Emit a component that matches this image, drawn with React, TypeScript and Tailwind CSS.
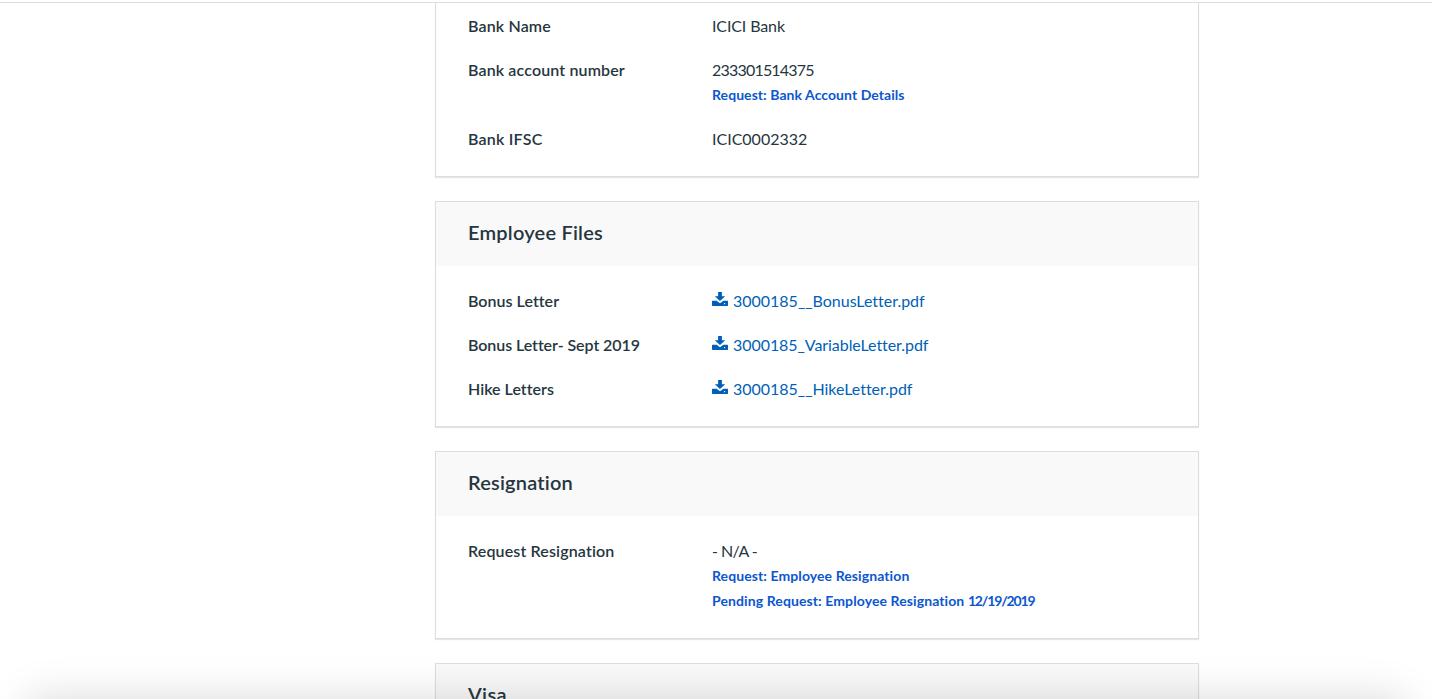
import type { ReactNode } from "react";

function DownloadIcon() {
  return (
    <svg width="16" height="14" viewBox="0 0 16 14" className="mt-[3px] mr-[5px] shrink-0" fill="currentColor" aria-hidden="true">
      <path d="M6.100 0h3.800v4.200h3.300L8 9 2.800 4.200h3.300z" />
      <path d="M.6 8.800H4.600L8 11.300l3.400-2.500h4q.6 0 .6.6v3.900q0 .6-.6.6H.6q-.6 0-.6-.6V9.400q0-.6.6-.6zM12 11.100v1.100h1.100v-1.100z" fillRule="evenodd" />
    </svg>
  );
}

function Card({ title, track, children }: { title: string; track: string; children?: ReactNode }) {
  return (
    <section className="mb-6 border border-[#dcdddf] bg-white shadow-[0_1px_1px_rgba(0,0,0,0.1)]">
      <h2 className={`flex h-16 items-center bg-[#f9f9f9] px-8 pb-[5px] text-xl font-semibold ${track}`}>{title}</h2>
      {children && <div className="flex flex-col gap-5 px-8 pt-[23px] pb-[25px]">{children}</div>}
    </section>
  );
}

function Row({ label, track, children }: { label: string; track: string; children: ReactNode }) {
  return (
    <div className="flex">
      <div className={`w-[244px] shrink-0 font-semibold ${track}`}>{label}</div>
      <div>{children}</div>
    </div>
  );
}

function RequestLink({ track, children }: { track: string; children: ReactNode }) {
  return <a className={`block h-[25px] text-sm leading-[26px] font-bold text-[#0b57d0] ${track}`}>{children}</a>;
}

function FileLink({ name, track }: { name: string; track: string }) {
  return (
    <a className={`flex text-[#005fb8] ${track}`}>
      <DownloadIcon />
      {name}
    </a>
  );
}

export default function App() {
  return (
    <div className="relative h-[699px] overflow-hidden bg-white pt-[2px] font-['Lato',sans-serif] text-base leading-6 whitespace-nowrap text-[#263640]">
      <div className="h-px bg-[#dcdddf]" />
      <main className="ml-[435px] w-[764px]">
        <section className="mb-6 flex flex-col gap-5 border border-t-0 border-[#dcdddf] px-8 pt-[11px] pb-[25px] shadow-[0_1px_1px_rgba(0,0,0,0.1)]">
          <Row label="Bank Name" track="tracking-[0.15px]"><span className="tracking-[-0.12px]">ICICI Bank</span></Row>
          <Row label="Bank account number" track="tracking-[0.14px]">
            <div className="tracking-[-0.8px]">233301514375</div>
            <RequestLink track="tracking-[0.06px]">Request: Bank Account Details</RequestLink>
          </Row>
          <Row label="Bank IFSC" track="tracking-[0.22px]">ICIC0002332</Row>
        </section>
        <Card title="Employee Files" track="tracking-[0.22px]">
          <Row label="Bonus Letter" track="tracking-[0.04px]"><FileLink name="3000185__BonusLetter.pdf" track="tracking-[-0.01px]" /></Row>
          <Row label="Bonus Letter- Sept 2019" track="tracking-[-0.06px]"><FileLink name="3000185_VariableLetter.pdf" track="tracking-[-0.06px]" /></Row>
          <Row label="Hike Letters" track="tracking-[0.02px]"><FileLink name="3000185__HikeLetter.pdf" track="tracking-[-0.02px]" /></Row>
        </Card>
        <Card title="Resignation" track="tracking-[0.19px]">
          <Row label="Request Resignation" track="tracking-[0.14px]">
            <div className="tracking-[-0.55px]">- N/A -</div>
            <RequestLink track="tracking-[0.09px]">Request: Employee Resignation</RequestLink>
            <RequestLink track="tracking-[0.1px]">
              Pending Request: Employee Resignation <span className="tracking-[-1.15px]">12/19/2019</span>
            </RequestLink>
          </Row>
        </Card>
        <Card title="Visa" track="tracking-[0.35px]" />
      </main>
      <div className="absolute inset-x-7 top-full h-24 shadow-[0_0_44px_0_rgba(0,0,0,0.15)]" />
    </div>
  );
}
